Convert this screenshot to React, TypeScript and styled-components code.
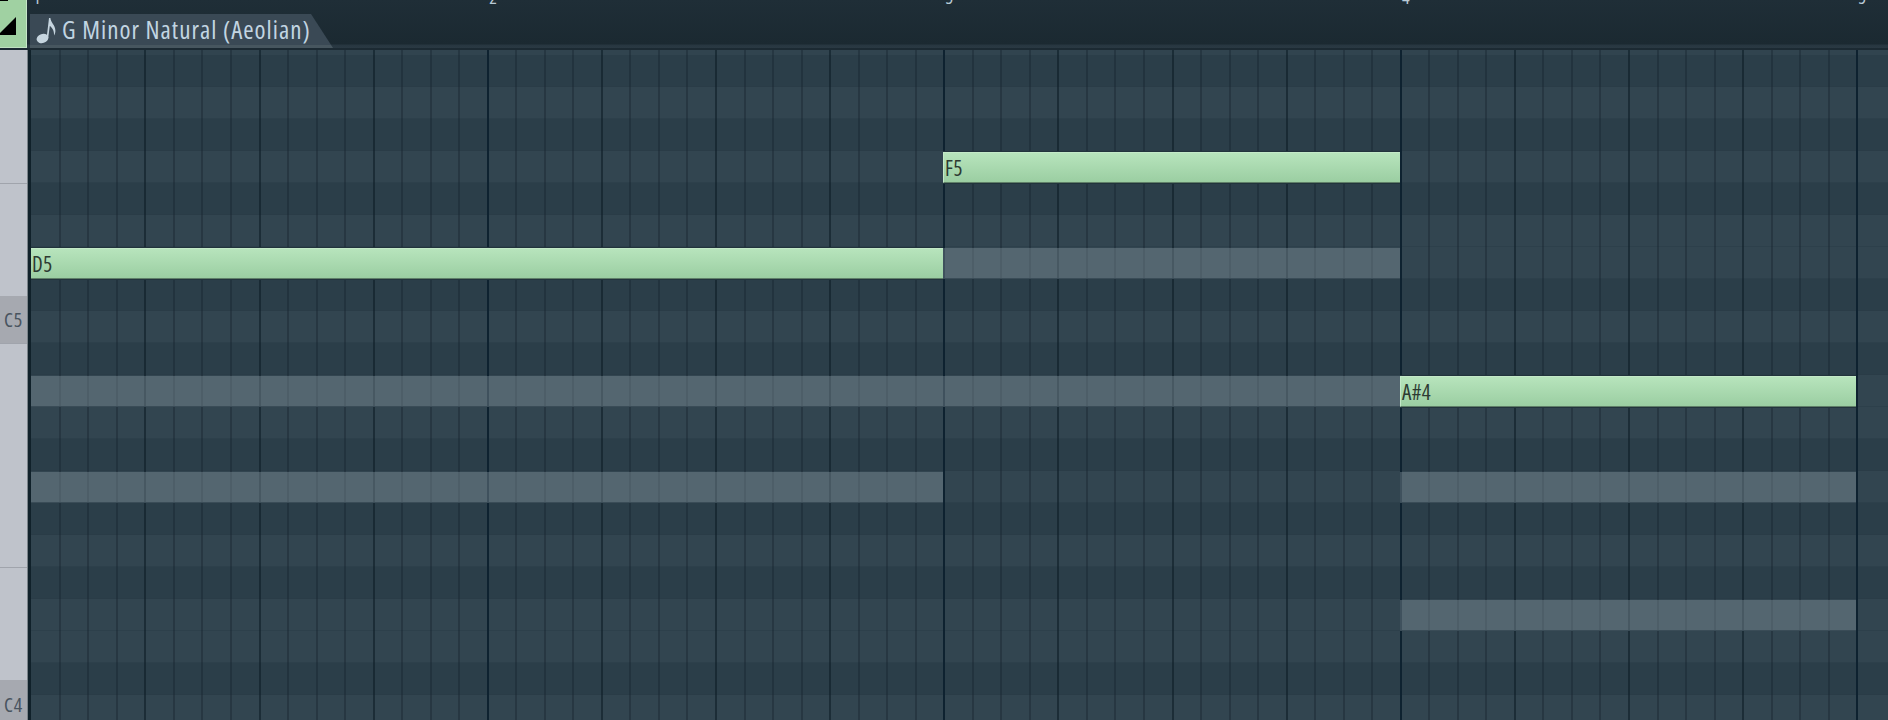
import React from 'react';
import styled, {createGlobalStyle} from 'styled-components';

const STEP = 28.53;
const ORIGIN = -0.7;
const STEPS_PER_BAR = 16;
const STEPS_PER_BEAT = 4;
const TOTAL_STEPS = 65;

const stepX = (step: number): number => Math.round(ORIGIN + (step * STEP));

const GlobalStyle = createGlobalStyle`
	html, body {
		margin: 0;
		padding: 0;
		background: #1d2b34;
	}

	body {
		font-family: "Open Sans", "Liberation Sans", sans-serif;
		font-stretch: 75%;
	}
`;

const Page = styled.div`
	width: 1888px;
	height: 720px;
	display: flex;
	flex-direction: column;
	overflow: hidden;
`;

const Header = styled.header`
	display: flex;
	height: 50px;
	flex: none;
	background: #1c2a33;
`;

const CornerButton = styled.div`
	width: 27px;
	height: 48px;
	flex: none;
	box-sizing: border-box;
	background: #a0d1a2;
	border-right: 1px solid #c6e6c8;
	border-bottom: 1px solid #bfe0c2;
	color: #000;

	svg {
		display: block;
	}
`;

const TopBar = styled.div`
	flex: 1;
	display: flex;
	flex-direction: column;
	min-width: 0;
	background: linear-gradient(#1f2e37, #1b2931 88%, #273640 90%, #2a3943 96%, #1c2a33 96%);
`;

const Ruler = styled.div`
	height: 14px;
	flex: none;
	display: flex;
	overflow: hidden;
	padding-left: 6px;
`;

const BarNumber = styled.span`
	width: 456.3px;
	flex: none;
	height: 20px;
	margin-top: -13px;
	font-size: 18px;
	line-height: 20px;
	color: #b9cad6;
`;

const Tab = styled.div`
	width: 303px;
	height: 34px;
	box-sizing: border-box;
	margin-left: 3px;
	display: flex;
	align-items: center;
	gap: 6px;
	padding: 0 0 4px 6px;
	background: linear-gradient(#3a4955 92%, #47565f 92%);
	clip-path: polygon(0 0, 281px 0, 303px 100%, 0 100%);
	font-size: 25px;
	letter-spacing: 1px;
	color: #c2d5e2;
	white-space: nowrap;

	svg {
		flex: none;
		margin-top: 3px;
	}
`;

const Body = styled.main`
	flex: 1;
	display: flex;
	min-height: 0;
`;

const Keys = styled.div`
	width: 28px;
	flex: none;
	box-sizing: border-box;
	display: flex;
	flex-direction: column;
	background: #bfc3cb;
	border-right: 1px solid #7b848a;
`;

const Key = styled.div<{$height: number; $root?: boolean; $line?: boolean}>`
	height: ${props => props.$height}px;
	flex: none;
	box-sizing: border-box;
	display: flex;
	align-items: center;
	padding: 0 0 0 4px;
	background: ${props => props.$root ? '#a6a9b0' : 'transparent'};
	border-bottom: ${props => props.$line ? '1px solid #a0a4ac' : 'none'};
	font-size: 20px;
	letter-spacing: 1px;
	color: #49545f;
`;

const Gutter = styled.div`
	width: 3px;
	flex: none;
	background: #10212a;
`;

const Roll = styled.div`
	position: relative;
	flex: 1;
	min-width: 0;
	display: flex;
	flex-direction: column;
	overflow: hidden;
`;

const RollTop = styled.div`
	height: 5px;
	flex: none;
	background: #31444f;
`;

const Row = styled.div<{$dark: boolean}>`
	position: relative;
	height: 32px;
	flex: none;
	box-sizing: border-box;
	background: ${props => props.$dark ? '#2b3e49' : '#324550'};
	border-bottom: 1px solid ${props => props.$dark ? '#2a3c47' : '#2d404b'};
`;

const GridLine = styled.div<{$kind: 'step' | 'beat' | 'bar'}>`
	position: absolute;
	top: 0;
	bottom: 0;
	width: 2px;
	z-index: 1;
	background: ${props => ({step: 'rgba(20, 35, 45, 0.38)', beat: 'rgba(15, 30, 40, 0.62)', bar: '#0e2230'})[props.$kind]};
`;

const Ghost = styled.div`
	position: absolute;
	top: 1px;
	height: 31px;
	z-index: 2;
	background: rgba(130, 147, 157, 0.42);
	border-bottom: 1px solid #3a4c57;
	box-sizing: border-box;
`;

const Note = styled.div`
	position: absolute;
	top: 1px;
	height: 31px;
	z-index: 3;
	box-sizing: border-box;
	display: flex;
	align-items: center;
	padding: 0 0 0 1px;
	background: linear-gradient(#b7e4bc, #9bcea2);
	border-top: 1px solid #c4e9c8;
	border-left: 1px solid #c4e9c8;
	border-bottom: 1px solid #5f7f68;
	box-shadow: 0 -1px 0 #22343c, 0 1px 0 #22343c;
	font-size: 21px;
	letter-spacing: 0.5px;
	color: #2d3a32;
`;

type Segment = {
	from: number;
	to: number;
	label?: string;
};

type RowData = {
	dark: boolean;
	segments?: Segment[];
};

const rows: RowData[] = [
	{dark: true},
	{dark: false},
	{dark: true},
	{dark: false, segments: [{from: 32, to: 48, label: 'F5'}]},
	{dark: true},
	{dark: false},
	{dark: false, segments: [{from: 0, to: 32, label: 'D5'}, {from: 32, to: 48}]},
	{dark: true},
	{dark: false},
	{dark: true},
	{dark: false, segments: [{from: 0, to: 48}, {from: 48, to: 64, label: 'A#4'}]},
	{dark: false},
	{dark: true},
	{dark: false, segments: [{from: 0, to: 32}, {from: 48, to: 64}]},
	{dark: true},
	{dark: false},
	{dark: true},
	{dark: false, segments: [{from: 48, to: 64}]},
	{dark: false},
	{dark: true},
	{dark: false}
];

const lineKind = (step: number): 'step' | 'beat' | 'bar' => {
	if (step % STEPS_PER_BAR === 0) {
		return 'bar';
	}

	return step % STEPS_PER_BEAT === 0 ? 'beat' : 'step';
};

const MusicNote = (): JSX.Element => (
	<svg width="20" height="27" viewBox="0 0 20 27" aria-hidden="true">
		<ellipse cx="6.5" cy="21.5" rx="6" ry="4.6" transform="rotate(-18 6.5 21.5)" fill="#c6d5df"/>
		<path d="M10.6 21 L13 1 L14.4 1 C14.8 6 19.6 8 19.4 14 C19.3 16 18.6 17.6 18 18.4 C18.4 14 16 10.4 13.8 9 L12.2 21 Z" fill="#c6d5df"/>
	</svg>
);

const CornerIcon = (): JSX.Element => (
	<svg width="26" height="47" viewBox="0 0 26 47" aria-hidden="true">
		<path d="M0 0 H8 V1 H0 Z" fill="currentColor"/>
		<path d="M0 33 L16 17 V35 H0 Z" fill="currentColor"/>
	</svg>
);

const App = (): JSX.Element => {
	const lines = Array.from({length: TOTAL_STEPS}, (_, step) => step).slice(1);

	return (
		<Page>
			<GlobalStyle/>
			<Header>
				<CornerButton>
					<CornerIcon/>
				</CornerButton>
				<TopBar>
					<Ruler>
						{[1, 2, 3, 4, 5].map(bar => <BarNumber key={bar}>{bar}</BarNumber>)}
					</Ruler>
					<Tab>
						<MusicNote/>
						<span>G Minor Natural (Aeolian)</span>
					</Tab>
				</TopBar>
			</Header>
			<Body>
				<Keys>
					<Key $line $height={134}/>
					<Key $height={112}/>
					<Key $root $line $height={48}>C5</Key>
					<Key $line $height={224}/>
					<Key $height={112}/>
					<Key $root $height={48}>C4</Key>
				</Keys>
				<Gutter/>
				<Roll>
					<RollTop/>
					{lines.map(step => (
						<GridLine key={step} $kind={lineKind(step)} style={{left: stepX(step)}}/>
					))}
					{rows.map((row, index) => (
						// eslint-disable-next-line react/no-array-index-key
						<Row key={index} $dark={row.dark}>
							{row.segments?.map(segment => {
								const place = {left: stepX(segment.from), width: stepX(segment.to) - stepX(segment.from)};

								return segment.label ?
									<Note key={segment.from} style={place}>{segment.label}</Note> :
									<Ghost key={segment.from} style={place}/>;
							})}
						</Row>
					))}
				</Roll>
			</Body>
		</Page>
	);
};

export default App;
